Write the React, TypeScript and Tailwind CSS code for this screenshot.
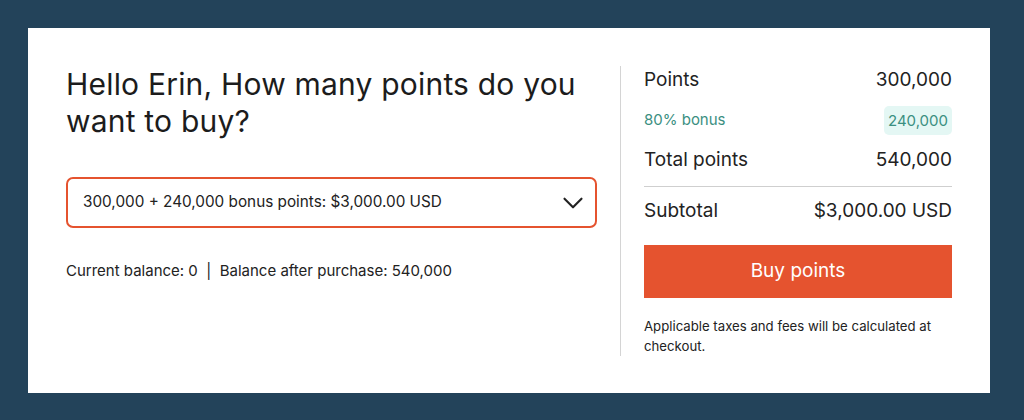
import { ChevronDown } from "lucide-react";

const font = "font-['Inter','Liberation_Sans',sans-serif]";

function Row({ label, value }: { label: string; value: string }) {
  return (
    <div className="flex h-[28px] items-center justify-between text-[19px] text-[#222]">
      <span>{label}</span>
      <span>{value}</span>
    </div>
  );
}

export default function App() {
  return (
    <div className={`h-[420px] w-[1024px] bg-[#23435a] px-[28px] pt-[28px] ${font}`}>
      <div className="flex h-[365px] w-[962px] bg-white px-[38px] pt-[38px]">
        {/* left: selection */}
        <div className="w-[531px]">
          <h1 className="text-[30px] leading-[37px] font-normal tracking-[0.2px] text-[#1c1c1c]">
            Hello Erin, How many points do you want to buy?
          </h1>
          <button className="mt-[37px] flex h-[51px] w-full items-center justify-between rounded-[7px] border-2 border-[#e5532f] pl-[15px] pr-[5px] text-[15.3px] text-[#222]">
            <span>300,000 + 240,000 bonus points: $3,000.00 USD</span>
            <ChevronDown className="h-[34px] w-[34px]" strokeWidth={1.5} />
          </button>
          <p className="mt-[32px] text-[15px] text-[#222]">
            Current balance: 0 &nbsp;|&nbsp; Balance after purchase: 540,000
          </p>
        </div>

        <div className="ml-[23px] h-[290px] w-px bg-[#d4d4d4]" />

        {/* right: summary */}
        <div className="ml-[23px] w-[308px]">
          <Row label="Points" value="300,000" />
          <div className="mt-[12px] flex h-[29px] items-center justify-between text-[15px] text-[#3b8f81]">
            <span>80% bonus</span>
            <span className="rounded-[5px] bg-[#e4f7f4] px-[4px] leading-[29px]">240,000</span>
          </div>
          <div className="mt-[11px]">
            <Row label="Total points" value="540,000" />
          </div>
          <div className="mt-[12px] h-px bg-[#cfcfcf]" />
          <div className="mt-[10px]">
            <Row label="Subtotal" value="$3,000.00 USD" />
          </div>
          <button className="mt-[20px] h-[53px] w-full bg-[#e5532f] text-[19px] text-white">
            Buy points
          </button>
          <p className="mt-[18px] text-[13.2px] leading-[20px] text-[#222]">
            Applicable taxes and fees will be calculated at checkout.
          </p>
        </div>
      </div>
    </div>
  );
}
